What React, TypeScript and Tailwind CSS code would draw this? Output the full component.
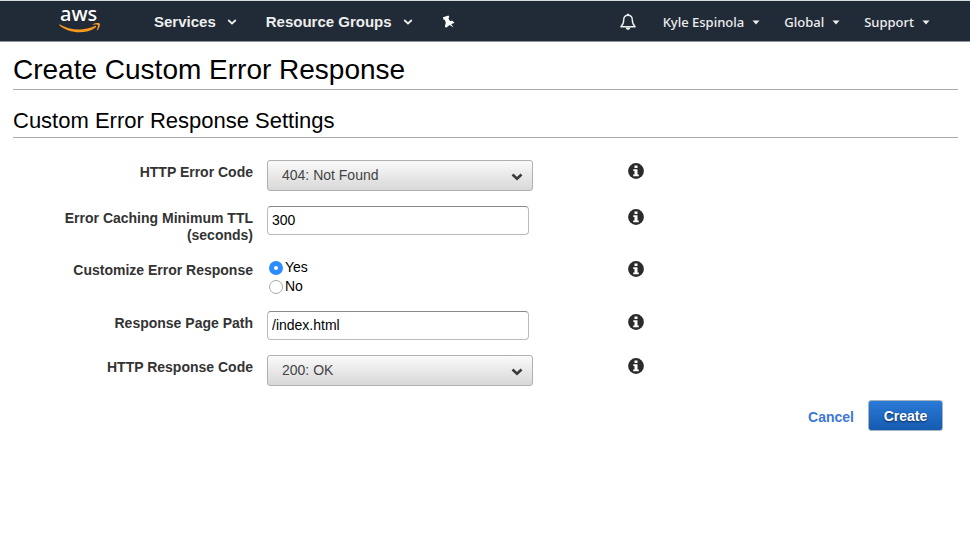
import React, { useState } from "react";
import type { ReactNode } from "react";

function AwsLogo() {
  return (
    <svg viewBox="0 -12 42 38" className="-mt-3 h-[38px] w-[42px]" role="img" aria-label="AWS">
      <text x="1" y="13" fill="#fff" className="font-['Noto_Sans',sans-serif] text-[20px] font-medium">
        aws
      </text>
      <path d="M.8 16.4c9 5.4 23.6 7.2 34.9 1.6 1.3-.5 1.9.6.9 1.4C27 26.5 10.2 26 .3 17.3c-.5-.5 0-1.2.5-.9z" fill="#f7981f" />
      <path d="M33.8 16.3c2-1.5 6.1-1.7 6.9-.9.8.9-.3 5-2.3 6.8-.4.3-.8.1-.6-.4.7-1.7 1.6-4.1 1-4.8-.6-.6-3.1-.4-4.6-.2-.5.1-.7-.2-.4-.5z" fill="#f7981f" />
    </svg>
  );
}

function Chevron() {
  return (
    <svg viewBox="0 0 10 6" className="h-[6px] w-[10px]" aria-hidden="true">
      <path d="M1.2 1l3.8 3.5L8.8 1" fill="none" stroke="#eee" strokeWidth="1.7" />
    </svg>
  );
}

function Caret() {
  return (
    <svg viewBox="0 0 8 6" className="h-[6px] w-[8px]" aria-hidden="true">
      <path d="M.5 1.5h7L4 5.5z" fill="#eee" />
    </svg>
  );
}

function Pin() {
  return (
    <svg viewBox="0 0 14 14" className="h-[14px] w-[14px]" aria-hidden="true">
      <path
        d="M1 2.2L6.500.5 7.300 2 6.400 3.400 8 5.900l2.300-.2 2.200 2-3.300 1.500 2.400 3.400L7.600 10l-3.500 2.700-1.200-1.300.9-3.900L2.700 4.700 1.300 4.500z"
        fill="#fff"
      />
    </svg>
  );
}

function Bell() {
  return (
    <svg viewBox="0 0 16 18" className="h-[18px] w-[16px]" aria-hidden="true">
      <path
        d="M8 2.2c-3 0-4.3 2.3-4.3 4.8 0 3.5-.9 5-2.8 6.7h14.2c-1.9-1.7-2.8-3.2-2.8-6.7 0-2.5-1.3-4.8-4.3-4.8z"
        fill="none"
        stroke="#eee"
        strokeWidth="1.4"
        strokeLinejoin="round"
      />
      <path d="M7 .8h2v1.8H7zM5.7 14.4h4.6c-.2 1.6-1 2.4-2.3 2.4s-2.1-.8-2.3-2.4z" fill="#eee" />
    </svg>
  );
}

function InfoButton({ topic }: { topic: string }) {
  return (
    <button type="button" aria-label={`About ${topic}`} className="block h-4 w-4">
      <svg viewBox="0 0 16 16" className="h-4 w-4" aria-hidden="true">
        <circle cx="8" cy="8" r="7.9" fill="#2b2b2b" />
        <path d="M6.5 2.6h3v2.5h-3zM5.3 6.2h4.2v5.2h1.3v1.8H5.2v-1.8h1.3V8H5.3z" fill="#fff" />
      </svg>
    </button>
  );
}

function PrimaryMenu({ children }: { children: ReactNode }) {
  return (
    <button type="button" className="flex items-center gap-[11px] text-[15px] font-bold leading-5 text-[#eee]">
      {children}
      <Chevron />
    </button>
  );
}

function AccountMenu({ children }: { children: ReactNode }) {
  return (
    <button
      type="button"
      className="flex items-center gap-2 font-['Noto_Sans',sans-serif] text-[13px] font-medium leading-5 text-[#eee]"
    >
      {children}
      <Caret />
    </button>
  );
}

function FormRow({ label, htmlFor, children }: { label: string; htmlFor?: string; children: ReactNode }) {
  const labelClass = "-mb-px block w-60 shrink-0 pt-1 text-right text-[14px] font-bold leading-[17px] text-[#333]";
  const content = (
    <>
      {htmlFor ? (
        <label htmlFor={htmlFor} className={labelClass}>
          <span className="inline-block max-w-[200px]">{label}</span>
        </label>
      ) : (
        <span id="customize-label" className={labelClass}>
          {label}
        </span>
      )}
      <div className="w-[347px] shrink-0">{children}</div>
      <div className="pt-[3px]">
        <InfoButton topic={label} />
      </div>
    </>
  );
  return htmlFor ? (
    <div className="flex gap-[14px]">{content}</div>
  ) : (
    <div role="radiogroup" aria-labelledby="customize-label" className="flex gap-[14px]">
      {content}
    </div>
  );
}

function SelectField({ id, options }: { id: string; options: string[] }) {
  return (
    <div className="relative w-[266px]">
      <select
        id={id}
        className="block h-[31px] w-full appearance-none rounded-[3px] border border-[#b0b0b0] bg-linear-to-b from-[#fafafa] to-[#d8d8d8] pr-8 pl-[14px] text-[14px] text-[#444]"
      >
        {options.map((option) => (
          <option key={option}>{option}</option>
        ))}
      </select>
      <svg viewBox="0 0 12 8" className="pointer-events-none absolute top-[13px] right-[10px] h-2 w-3" aria-hidden="true">
        <path d="M1.5 1.5L6 5.7l4.5-4.2" fill="none" stroke="#3a3a3a" strokeWidth="2.6" />
      </svg>
    </div>
  );
}

function TextField({ id, value }: { id: string; value: string }) {
  return (
    <input
      id={id}
      type="text"
      defaultValue={value}
      className="block h-[29px] w-[262px] rounded-[4px] border border-[#bbb] border-t-[#888] bg-white px-1 pb-[2px] text-[14px] text-black"
    />
  );
}

function RadioOption({ label, checked, onSelect }: { label: string; checked: boolean; onSelect: () => void }) {
  return (
    <label className="flex h-[19px] w-fit items-center gap-[2px] text-[14px] leading-[19px] text-black">
      <input
        type="radio"
        name="customize"
        checked={checked}
        onChange={onSelect}
        className="h-[14px] w-[14px] appearance-none rounded-full border border-[#aaa] bg-white checked:border-[5px] checked:border-[#2b8cff]"
      />
      {label}
    </label>
  );
}

export default function App() {
  const [customize, setCustomize] = useState(true);
  return (
    <div className="min-h-screen bg-white font-['Liberation_Sans',Arial,sans-serif] text-black">
      <header className="flex h-[42px] items-center border-y border-t-[#d5dbdb] border-b-[#8d9399] bg-[#212b37] pr-10 pl-[59px]">
        <a href="#home">
          <AwsLogo />
        </a>
        <nav className="ml-[53px] flex items-center gap-[29px] pt-[2px]" aria-label="Services">
          <PrimaryMenu>Services</PrimaryMenu>
          <PrimaryMenu>Resource Groups</PrimaryMenu>
          <button type="button" aria-label="Pinned shortcuts">
            <Pin />
          </button>
        </nav>
        <div className="ml-auto flex items-center gap-6 pt-px">
          <button type="button" aria-label="Notifications" className="pr-[3px]">
            <Bell />
          </button>
          <AccountMenu>Kyle Espinola</AccountMenu>
          <AccountMenu>Global</AccountMenu>
          <AccountMenu>Support</AccountMenu>
        </div>
      </header>

      <main className="pr-3 pl-[13px]">
        <h1 className="border-b border-[#aaa] pt-[11px] pb-[3px] text-[28px] leading-[33px]">Create Custom Error Response</h1>
        <h2 className="border-b border-[#aaa] pt-[17px] pb-[3px] text-[22px] leading-[27px]">Custom Error Response Settings</h2>

        <form className="pt-[22px]" onSubmit={(event) => event.preventDefault()}>
          <div className="flex flex-col gap-[15px]">
            <FormRow label="HTTP Error Code" htmlFor="error-code">
              <SelectField id="error-code" options={["404: Not Found"]} />
            </FormRow>
            <FormRow label="Error Caching Minimum TTL (seconds)" htmlFor="ttl">
              <TextField id="ttl" value="300" />
            </FormRow>
            <FormRow label="Customize Error Response">
              <div className="pl-[2px]">
                <RadioOption label="Yes" checked={customize} onSelect={() => setCustomize(true)} />
                <RadioOption label="No" checked={!customize} onSelect={() => setCustomize(false)} />
              </div>
            </FormRow>
            <FormRow label="Response Page Path" htmlFor="page-path">
              <TextField id="page-path" value="/index.html" />
            </FormRow>
            <FormRow label="HTTP Response Code" htmlFor="response-code">
              <SelectField id="response-code" options={["200: OK"]} />
            </FormRow>
          </div>
          <div className="flex items-center justify-end gap-[14px] pt-[14px] pr-[15px]">
            <a href="#cancel" className="pt-[3px] text-[14px] font-bold text-[#3c78d8]">
              Cancel
            </a>
            <button
              type="submit"
              className="h-[31px] w-[75px] rounded-[3px] border border-[#a9b4c0] bg-linear-to-b from-[#2a7ad8] to-[#155bb0] pt-px text-[14px] font-bold text-white text-shadow-[0_1px_2px_#00000099]"
            >
              Create
            </button>
          </div>
        </form>
      </main>
    </div>
  );
}
